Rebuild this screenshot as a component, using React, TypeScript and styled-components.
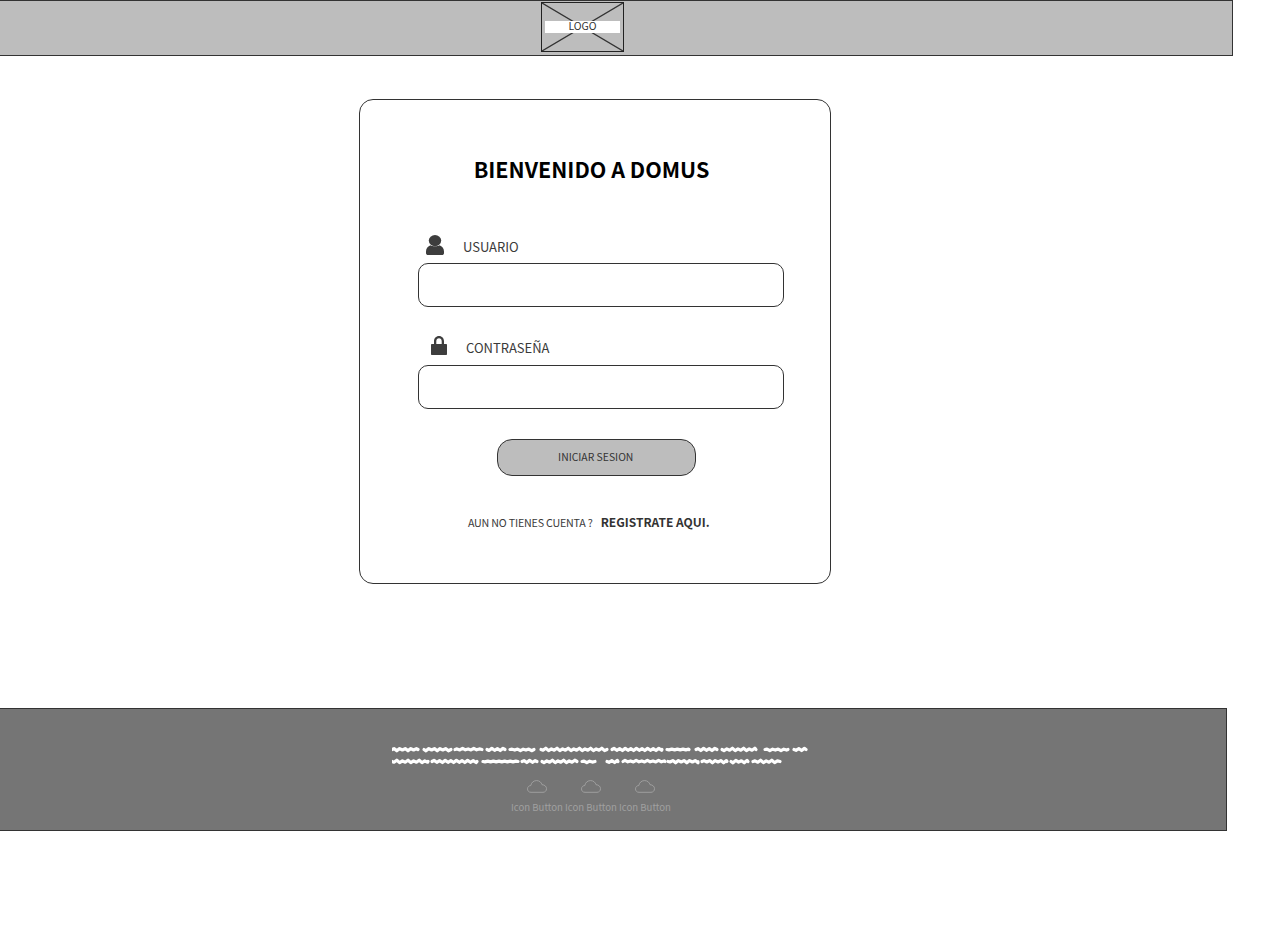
import React from "react";
import styled, { createGlobalStyle } from "styled-components";

const FONT = `"Noto Sans CJK JP", "Noto Sans", sans-serif`;

const Global = createGlobalStyle`
  html, body { margin: 0; padding: 0; background: #fff; }
  body { font-family: ${FONT}; width: 1280px; height: 936px; overflow: hidden; }
  * { box-sizing: border-box; }
`;

const Page = styled.div`
  display: flex;
  flex-direction: column;
  align-items: flex-start;
`;

const Header = styled.header`
  width: 1233px;
  height: 56px;
  background: #bdbdbd;
  border: 1px solid #333;
  border-left: 0;
  display: flex;
  padding: 1px 0 0 541px;
`;

const LogoBox = styled.div`
  position: relative;
  width: 83px;
  height: 50px;
  border: 1px solid #222;
`;

const LogoCross = styled.svg`
  display: block;
  width: 100%;
  height: 100%;
`;

const LogoLabel = styled.span`
  position: absolute;
  left: 3px;
  right: 3px;
  top: 18px;
  height: 12px;
  background: #fff;
  color: #333;
  font-size: 10.5px;
  line-height: 10px;
  text-align: center;
`;

const Card = styled.main`
  width: 472px;
  height: 485px;
  margin: 43px 0 0 359px;
  border: 1px solid #333;
  border-radius: 14px;
  background: #fff;
  display: flex;
  flex-direction: column;
  padding: 52px 46px 0 58px;
`;

const Title = styled.h1`
  margin: 0 0 0 -19px;
  font-size: 21.5px;
  line-height: 34px;
  font-weight: 700;
  color: #000;
  text-align: center;
`;

const Field = styled.div<{ $top: number }>`
  margin-top: ${(p) => p.$top}px;
  display: flex;
  flex-direction: column;
  gap: 6px;
`;

const LabelRow = styled.label<{ $iconLeft: number; $gap: number; $drop: number }>`
  display: flex;
  align-items: center;
  height: 23px;
  padding-top: ${(p) => p.$drop}px;
  padding-left: ${(p) => p.$iconLeft}px;
  gap: ${(p) => p.$gap}px;
  font-size: 13px;
  color: #3a3a3a;
`;

const FieldIcon = styled.svg`
  display: block;
  fill: #3d3d3d;
  flex: none;
  margin-top: -4px;
`;

const Input = styled.div`
  width: 366px;
  height: 44px;
  border: 1px solid #333;
  border-radius: 10px;
  background: #fff;
`;

const Submit = styled.button`
  align-self: flex-start;
  margin: 30px 0 0 79px;
  width: 198.5px;
  height: 37px;
  border: 1px solid #333;
  border-radius: 15px;
  background: #bdbdbd;
  color: #333;
  font-family: ${FONT};
  font-size: 10.4px;
  padding: 0 1px 2px 0;
`;

const Signup = styled.p`
  margin: 37px 0 0 50px;
  display: flex;
  align-items: baseline;
  gap: 8px;
  line-height: 18px;
  font-size: 10.7px;
  letter-spacing: -0.2px;
  color: #3a3a3a;
`;

const SignupLink = styled.strong`
  font-size: 12px;
  letter-spacing: 0;
  font-weight: 700;
  color: #333;
`;

const Footer = styled.footer`
  width: 1227px;
  height: 123px;
  margin-top: 124px;
  background: #757575;
  border: 1px solid #333;
  border-left: 0;
  padding-top: 35px;
  display: flex;
  flex-direction: column;
  padding-left: 392px;
`;

const Scribble = styled.svg`
  display: block;
  filter: blur(0.5px);
`;

const Socials = styled.div`
  display: flex;
  gap: 2px;
  margin: 12px 0 0 119px;
`;

const Social = styled.div`
  width: 52px;
  display: flex;
  flex-direction: column;
  align-items: center;
  color: #a0a0a0;
  font-size: 9.6px;
  line-height: 14px;
  white-space: nowrap;
`;

const CloudIcon = styled.svg`
  display: block;
  fill: none;
  stroke: #a8a8a8;
  stroke-width: 0.8;
  margin-bottom: 7px;
`;

const LINES: [number, number][][] = [
  [[392,418],[424,451],[455,482],[487,505],[510,534],[541,607],[612,662],[667,689],[696,717],[722,756],[765,788],[794,806]],
  [[392,428],[432,477],[483,518],[522,537],[542,577],[582,595],[607,618],[623,665],[668,698],[702,727],[731,748],[753,780]],
];

function wordPath(a: number, b: number, y: number, seed: number): string {
  let d = `M${a - 392} ${y}`;
  let up = seed % 2 === 0;
  let n = seed * 7 + 3;
  for (let x = a + 2; x < b; x += 2.8) {
    n = (n * 13 + 5) % 17;
    const amp = 0.3 + (n / 17) * 1.1;
    d += ` L${(x - 392).toFixed(1)} ${(y + (up ? -amp : amp)).toFixed(1)}`;
    up = !up;
  }
  return d + ` L${b - 392} ${y}`;
}

function App() {
  return (
    <Page>
      <Global />
      <Header>
        <LogoBox>
          <LogoCross viewBox="0 0 81 48" preserveAspectRatio="none">
            <path d="M0 0L81 48M81 0L0 48" stroke="#333" strokeWidth="1.3" fill="none" />
          </LogoCross>
          <LogoLabel>LOGO</LogoLabel>
        </LogoBox>
      </Header>
      <Card>
        <Title>BIENVENIDO A DOMUS</Title>
        <Field $top={48}>
          <LabelRow $iconLeft={8} $gap={19} $drop={2}>
            <FieldIcon width="18" height="20" viewBox="0 0 18 20">
              <ellipse cx="9" cy="5.6" rx="6.2" ry="5.6" />
              <path d="M0 16.5C0 13 2 11.2 4.5 10.2C6.5 11.6 11.5 11.6 13.5 10.2C16 11.2 18 13 18 16.5V18C18 19.4 17 20 16 20H2C1 20 0 19.4 0 18Z" />
            </FieldIcon>
            USUARIO
          </LabelRow>
          <Input />
        </Field>
        <Field $top={29}>
          <LabelRow $iconLeft={13} $gap={19} $drop={0}>
            <FieldIcon width="16" height="19" viewBox="0 0 16 19">
              <path fillRule="evenodd" d="M3 8V5.2C3 2.3 5 0 8 0S13 2.3 13 5.2V8H15C15.6 8 16 8.4 16 9V18C16 18.6 15.6 19 15 19H1C.4 19 0 18.6 0 18V9C0 8.4 .4 8 1 8ZM5.3 8H10.7V5.2C10.7 3.5 9.6 2.2 8 2.2S5.3 3.5 5.3 5.2Z" />
            </FieldIcon>
            CONTRASEÑA
          </LabelRow>
          <Input />
        </Field>
        <Submit type="button">INICIAR SESION</Submit>
        <Signup>
          AUN NO TIENES CUENTA ?
          <SignupLink>REGISTRATE AQUI.</SignupLink>
        </Signup>
      </Card>
      <Footer>
        <Scribble width="416" height="24" viewBox="0 0 416 24">
          {LINES.map((words, li) =>
            words.map(([a, b], i) => (
              <path
                key={`${li}-${i}`}
                d={wordPath(a, b, 5.5 + li * 12, i + li * 5)}
                stroke="#fff"
                strokeWidth="3.2"
                strokeLinejoin="round"
                strokeLinecap="round"
                fill="none"
              />
            ))
          )}
        </Scribble>
        <Socials>
          {[0, 1, 2].map((i) => (
            <Social key={i}>
              <CloudIcon width="20" height="13" viewBox="0 0 20 13">
                <path d="M4 12.3C1.8 12.3 .5 10.8 .5 8.9C.5 7 1.9 5.6 3.8 5.5C4.3 2.6 6.6 .6 9.6 .6C12.4 .6 14.4 2.4 15 4.7C17.6 4.8 19.5 6.4 19.5 8.7C19.5 10.8 18 12.3 16 12.3Z" />
              </CloudIcon>
              Icon Button
            </Social>
          ))}
        </Socials>
      </Footer>
    </Page>
  );
}

export default App;
